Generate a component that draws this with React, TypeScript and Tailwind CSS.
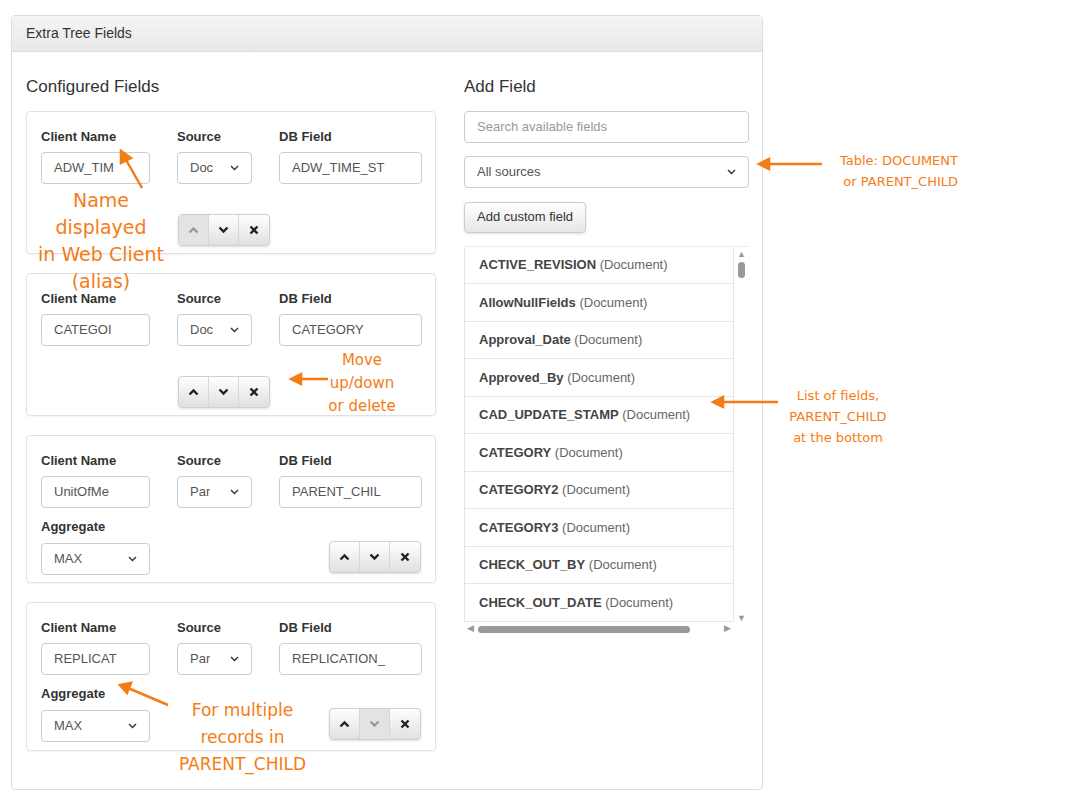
import React from "react";

const font = { fontFamily: '"Liberation Sans", Arial, sans-serif' };
const hand = { fontFamily: '"Comic Sans MS", "DejaVu Sans", sans-serif' };

function Btns({ upDisabled, downDisabled }: { upDisabled?: boolean; downDisabled?: boolean }) {
  const base = "w-[30px] h-[30px] flex items-center justify-center border-r border-[#d6d6d6] last:border-r-0";
  return (
    <div className="flex rounded border border-[#cfcfcf] bg-gradient-to-b from-white to-[#e0e0e0] shadow-sm">
      <div className={`${base} ${upDisabled ? "bg-[#e3e3e3] text-[#999]" : "text-[#222]"}`}>
        <svg width="11" height="8" viewBox="0 0 11 8"><path d="M1.5 6.5 5.5 2.5 9.5 6.5" stroke="currentColor" strokeWidth="2.4" fill="none" /></svg>
      </div>
      <div className={`${base} ${downDisabled ? "bg-[#e3e3e3] text-[#999]" : "text-[#222]"}`}>
        <svg width="11" height="8" viewBox="0 0 11 8"><path d="M1.5 1.5 5.5 5.5 9.5 1.5" stroke="currentColor" strokeWidth="2.4" fill="none" /></svg>
      </div>
      <div className={`${base} text-[#222]`}>
        <svg width="10" height="10" viewBox="0 0 10 10"><path d="M1.5 1.5 8.5 8.5M8.5 1.5 1.5 8.5" stroke="currentColor" strokeWidth="2.4" /></svg>
      </div>
    </div>
  );
}

function Sel({ text, w }: { text: string; w: string }) {
  return (
    <div className={`${w} h-[32px] border border-[#ccc] rounded flex items-center justify-between px-3 text-[13px] text-[#555]`}>
      <span className="overflow-hidden whitespace-nowrap">{text}</span>
      <svg width="9" height="6" viewBox="0 0 9 6"><path d="M1 1 4.5 4.5 8 1" stroke="#333" strokeWidth="1.4" fill="none" /></svg>
    </div>
  );
}

function Inp({ text, w }: { text: string; w: string }) {
  return (
    <div className={`${w} h-[32px] border border-[#ccc] rounded flex items-center px-3 text-[13px] text-[#555] overflow-hidden whitespace-nowrap`}>
      {text}
    </div>
  );
}

function Card({ name, src, db, agg, up, down, h }: { name: string; src: string; db: string; agg?: boolean; up?: boolean; down?: boolean; h: string }) {
  return (
    <div className={`border border-[#e2e2e2] rounded ${h} px-[14px] pt-[15px] shadow-[0_1px_2px_rgba(0,0,0,0.05)]`}>
      <div className="flex gap-[27px]">
        <div>
          <div className="text-[13px] font-bold text-[#333] mb-[6px]">Client Name</div>
          <Inp text={name} w="w-[109px]" />
        </div>
        <div>
          <div className="text-[13px] font-bold text-[#333] mb-[6px]">Source</div>
          <Sel text={src} w="w-[75px]" />
        </div>
        <div>
          <div className="text-[13px] font-bold text-[#333] mb-[6px]">DB Field</div>
          <Inp text={db} w="w-[143px]" />
        </div>
      </div>
      {agg ? (
        <div className="flex justify-between items-end mt-[9px]">
          <div>
            <div className="text-[13px] font-bold text-[#333] mb-[6px]">Aggregate</div>
            <Sel text="MAX" w="w-[109px]" />
          </div>
          <div className="mb-[2px]"><Btns upDisabled={up} downDisabled={down} /></div>
        </div>
      ) : (
        <div className="flex justify-center mt-[30px] pr-[14px]"><Btns upDisabled={up} downDisabled={down} /></div>
      )}
    </div>
  );
}

const fields = ["ACTIVE_REVISION", "AllowNullFields", "Approval_Date", "Approved_By", "CAD_UPDATE_STAMP", "CATEGORY", "CATEGORY2", "CATEGORY3", "CHECK_OUT_BY", "CHECK_OUT_DATE"];

export default function App() {
  return (
    <div className="relative w-[1066px] h-[803px] bg-white" style={font}>
      <div className="absolute left-[11px] top-[15px] w-[752px] h-[775px] border border-[#ddd] rounded">
        <div className="h-[36px] bg-gradient-to-b from-[#f5f5f5] to-[#e8e8e8] border-b border-[#ddd] px-[14px] flex items-center text-[14px] text-[#333]">Extra Tree Fields</div>
        <div className="flex px-[14px] pt-[22px] gap-[28px]">
          <div className="w-[410px]">
            <div className="text-[17px] text-[#333] mb-[11px]">Configured Fields</div>
            <div className="flex flex-col gap-[19px]">
              <Card name="ADW_TIM" src="Doc" db="ADW_TIME_ST" up h="h-[143px]" />
              <Card name="CATEGOI" src="Doc" db="CATEGORY" h="h-[143px]" />
              <Card name="UnitOfMe" src="Par" db="PARENT_CHIL" agg h="h-[148px]" />
              <Card name="REPLICAT" src="Par" db="REPLICATION_" agg down h="h-[149px]" />
            </div>
          </div>
          <div className="w-[285px]">
            <div className="text-[17px] text-[#333] mb-[11px]">Add Field</div>
            <div className="h-[32px] border border-[#ccc] rounded flex items-center px-3 text-[13px] text-[#999]">Search available fields</div>
            <div className="mt-[13px]"><Sel text="All sources" w="w-[285px]" /></div>
            <div className="mt-[14px] inline-flex h-[31px] items-center px-3 border border-[#ccc] rounded bg-gradient-to-b from-white to-[#e6e6e6] text-[13px] text-[#333] shadow-sm">Add custom field</div>
            <div className="mt-[13px] flex border-t border-[#eee] h-[391px]">
              <div className="w-[270px] flex flex-col">
                <div className="h-[376px] overflow-hidden border-l border-[#e6e6e6]">
                  {fields.map((f) => (
                    <div key={f} className="h-[37.5px] border-b border-[#e6e6e6] border-r flex items-center px-[14px] text-[13px] whitespace-nowrap">
                      <span className="font-bold text-[#444]">{f}</span>
                      <span className="text-[#666]">&nbsp;(Document)</span>
                    </div>
                  ))}
                </div>
                <div className="h-[15px] flex items-center gap-[4px] px-[3px]">
                  <span className="text-[9px] text-[#999]">◀</span>
                  <div className="h-[7px] w-[212px] rounded-full bg-[#999]" />
                  <div className="flex-1" />
                  <span className="text-[9px] text-[#999]">▶</span>
                </div>
              </div>
              <div className="w-[15px] h-[376px] flex flex-col items-center pt-[2px]">
                <span className="text-[9px] text-[#999] leading-[10px]">▲</span>
                <div className="w-[7px] h-[16px] rounded-full bg-[#999] mt-[3px]" />
                <div className="flex-1" />
                <span className="text-[9px] text-[#999] leading-[10px]">▼</span>
              </div>
            </div>
          </div>
        </div>
      </div>

      {/* annotations */}
      <div className="absolute inset-0 pointer-events-none text-[#f57c14]" style={hand}>
        <svg className="absolute left-0 top-0" width="1066" height="803">
          <g stroke="#f57c14" strokeWidth="2.5" fill="#f57c14">
            <line x1="142" y1="188" x2="125" y2="158" />
            <path d="M121 151 L121 163 L131 158 Z" />
            <line x1="328" y1="379" x2="298" y2="379" />
            <path d="M291 379 L301 374 L301 384 Z" />
            <line x1="822" y1="164" x2="766" y2="164" />
            <path d="M759 164 L769 159 L769 169 Z" />
            <line x1="778" y1="402" x2="720" y2="402" />
            <path d="M713 402 L723 397 L723 407 Z" />
            <line x1="168" y1="705" x2="128" y2="688" />
            <path d="M120 685 L131 683 L127 693 Z" />
          </g>
        </svg>
        <div className="absolute left-[30px] top-[187px] text-[19px] leading-[27px] text-center w-[142px]">Name displayed<br />in Web Client<br />(alias)</div>
        <div className="absolute left-[322px] top-[349px] text-[15px] leading-[23px] text-center w-[80px]">Move<br />up/down<br />or delete</div>
        <div className="absolute left-[808px] top-[150px] text-[13px] leading-[21px] text-right w-[150px]">Table: DOCUMENT<br />or PARENT_CHILD</div>
        <div className="absolute left-[778px] top-[385px] text-[13px] leading-[21px] text-center w-[120px]">List of fields,<br />PARENT_CHILD<br />at the bottom</div>
        <div className="absolute left-[165px] top-[697px] text-[17px] leading-[27px] text-center w-[155px]">For multiple<br />records in<br />PARENT_CHILD</div>
      </div>
    </div>
  );
}
